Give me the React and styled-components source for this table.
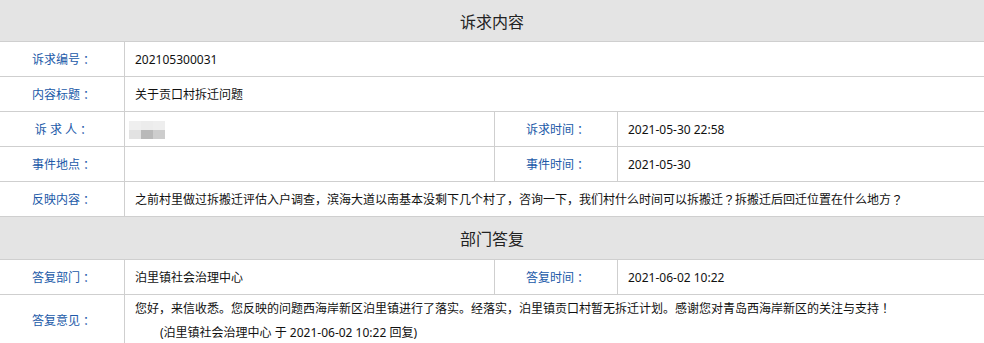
import React from 'react';
import styled, { createGlobalStyle } from 'styled-components';

const lineColor = '#cfcfcf';

const GlobalStyle = createGlobalStyle`
  html, body {
    margin: 0;
    padding: 0;
    background: #fff;
  }
  body {
    font-family: "Noto Sans", "Noto Sans CJK SC", sans-serif;
    font-size: 12px;
    color: #111;
  }
`;

const Page = styled.div`
  width: 984px;
  overflow: hidden;
`;

const SectionHeader = styled.div`
  height: ${({ h }) => h}px;
  display: flex;
  align-items: center;
  justify-content: center;
  background: #e4e4e4;
  border-bottom: 1px solid ${lineColor};
  font-size: 16px;
  color: #222;
`;

const Row = styled.div`
  display: grid;
  grid-template-columns: ${({ split }) =>
    split ? '124px 370px 123px 1fr' : '124px 1fr'};
  min-height: ${({ h }) => h || 34}px;
  border-bottom: 1px solid ${lineColor};
`;

const Label = styled.div`
  display: flex;
  align-items: center;
  justify-content: center;
  color: #2159a8;
  white-space: pre;
  border-left: ${({ first }) => (first ? 'none' : `1px solid ${lineColor}`)};
`;

const Value = styled.div`
  display: flex;
  align-items: center;
  padding-left: 10px;
  border-left: 1px solid ${lineColor};
  color: #111;
  white-space: pre;
`;

const ReplyText = styled.div`
  border-left: 1px solid ${lineColor};
  padding: 1px 0 0 10px;
  line-height: 24px;
  color: #111;
  white-space: pre;
`;

const Signature = styled.div`
  padding-left: 25px;
`;

// centred full-width marks, as the original font draws them
const Mark = styled.span`
  font-family: "Noto Sans CJK JP", sans-serif;
`;

const Mosaic = styled.div`
  display: grid;
  grid-template-columns: repeat(3, 12px);
  grid-template-rows: repeat(2, 9px);
  filter: blur(0.6px);
  margin-left: -6px;
  margin-top: 2px;
`;

const Tile = styled.div`
  background: ${({ c }) => c};
`;

const mosaicColors = ['#efefef', '#ececec', '#eeeeee', '#e2e2e2', '#b9b9b9', '#cdcdcd'];

const T = ({ children }) =>
  String(children)
    .split(/([：？！])/)
    .map((part, i) => (i % 2 ? <Mark key={i}>{part}</Mark> : part));

const App = () => (
  <Page>
    <GlobalStyle />
    <SectionHeader h={41}>诉求内容</SectionHeader>
    <Row>
      <Label first><T>诉求编号：</T></Label>
      <Value>202105300031</Value>
    </Row>
    <Row>
      <Label first><T>内容标题：</T></Label>
      <Value>关于贡口村拆迁问题</Value>
    </Row>
    <Row split>
      <Label first><T>诉 求 人：</T></Label>
      <Value>
        <Mosaic>
          {mosaicColors.map((c, i) => (
            <Tile key={i} c={c} />
          ))}
        </Mosaic>
      </Value>
      <Label><T>诉求时间：</T></Label>
      <Value>2021-05-30 22:58</Value>
    </Row>
    <Row split>
      <Label first><T>事件地点：</T></Label>
      <Value />
      <Label><T>事件时间：</T></Label>
      <Value>2021-05-30</Value>
    </Row>
    <Row>
      <Label first><T>反映内容：</T></Label>
      <Value>
        <T>之前村里做过拆搬迁评估入户调查，滨海大道以南基本没剩下几个村了，咨询一下，我们村什么时间可以拆搬迁？拆搬迁后回迁位置在什么地方？</T>
      </Value>
    </Row>
    <SectionHeader h={42}>部门答复</SectionHeader>
    <Row split>
      <Label first><T>答复部门：</T></Label>
      <Value>泊里镇社会治理中心</Value>
      <Label><T>答复时间：</T></Label>
      <Value>2021-06-02 10:22</Value>
    </Row>
    <Row h={50}>
      <Label first><T>答复意见：</T></Label>
      <ReplyText>
        <div>
          <T>您好，来信收悉。您反映的问题西海岸新区泊里镇进行了落实。经落实，泊里镇贡口村暂无拆迁计划。感谢您对青岛西海岸新区的关注与支持！</T>
        </div>
        <Signature>(泊里镇社会治理中心 于 2021-06-02 10:22 回复)</Signature>
      </ReplyText>
    </Row>
  </Page>
);

export default App;
